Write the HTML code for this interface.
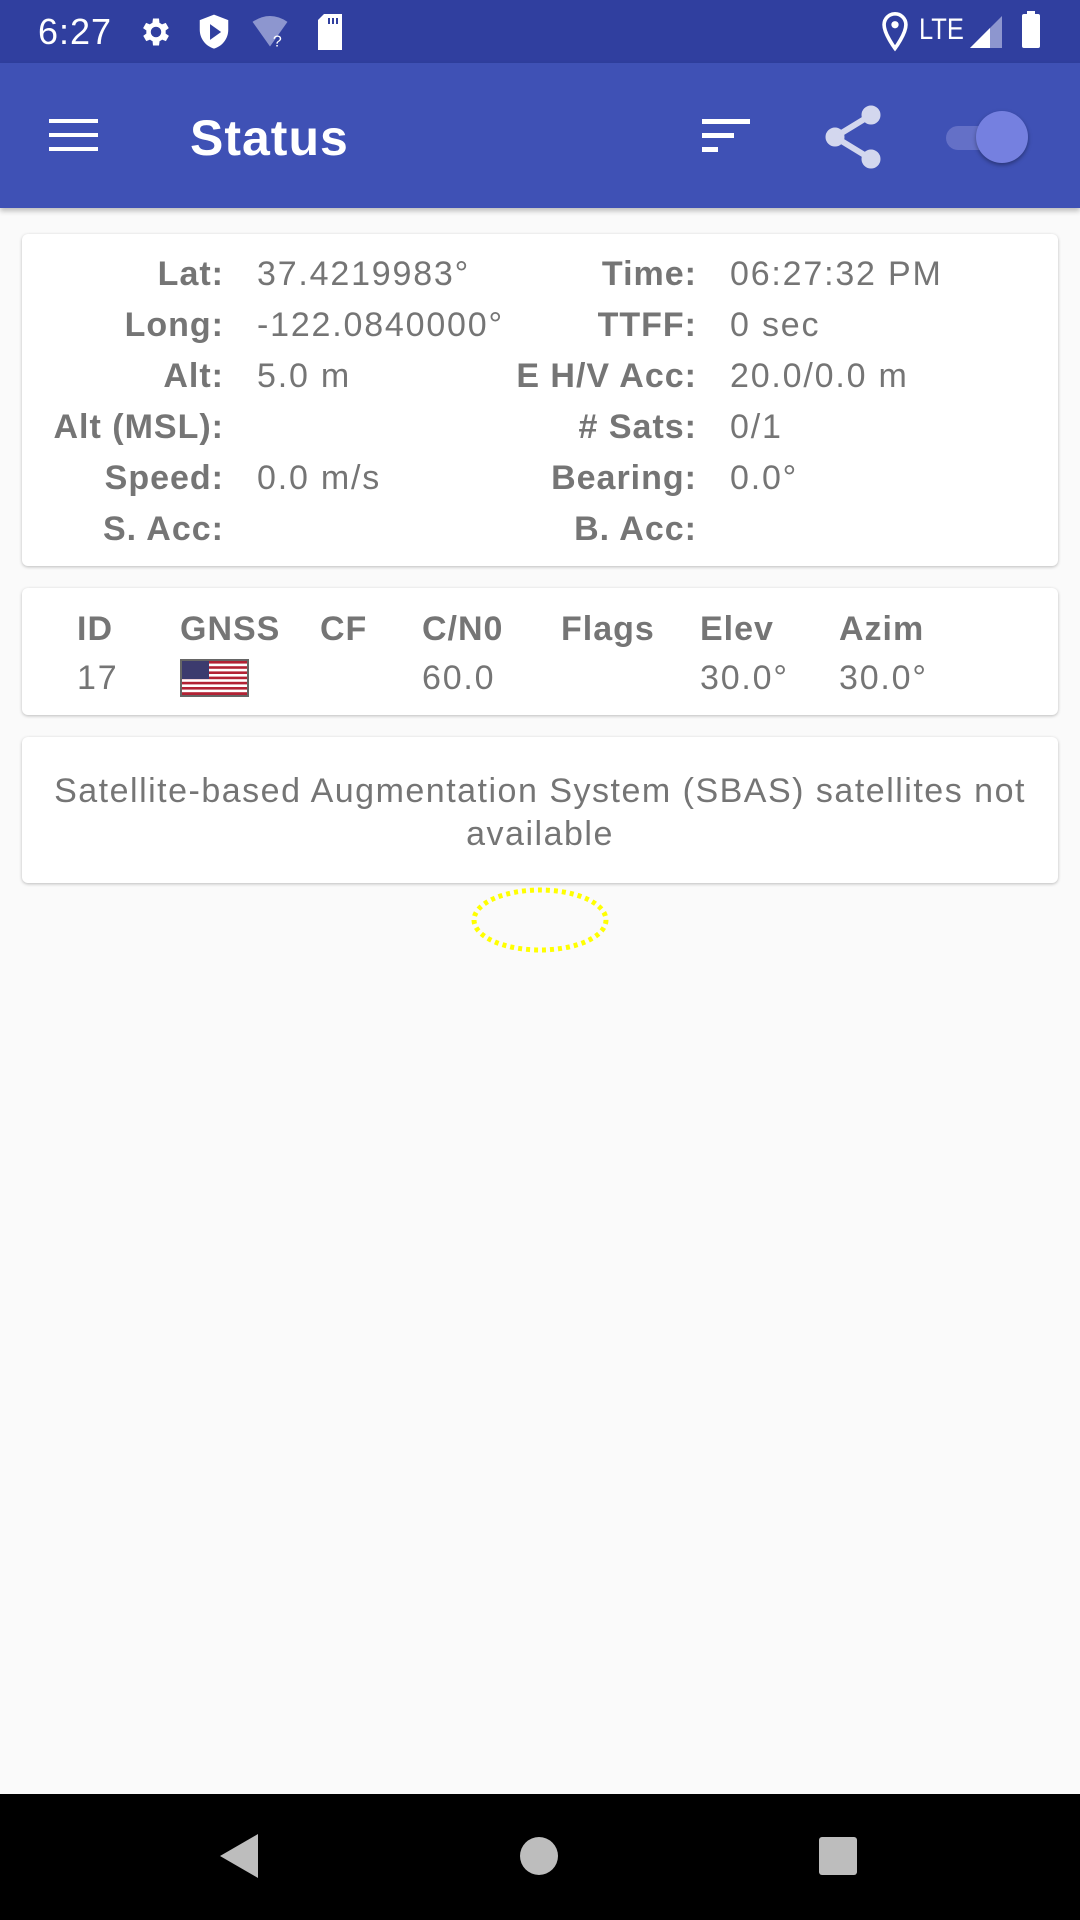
<!DOCTYPE html>
<html><head><meta charset="utf-8"><style>
*{margin:0;padding:0;box-sizing:border-box}
body{width:1080px;height:1920px;background:#FAFAFA;font-family:"Liberation Sans",sans-serif;position:relative;overflow:hidden;color:#757575}
.sb{position:absolute;left:0;top:0;width:1080px;height:63px;background:#303F9F;color:#fff}
.ab{position:absolute;left:0;top:63px;width:1080px;height:145px;background:#3F51B5;box-shadow:0 3px 5px rgba(0,0,0,.25)}
.card{position:absolute;left:22px;width:1036px;background:#fff;border-radius:6px;box-shadow:0 1px 3px rgba(0,0,0,.25)}
.t{position:absolute;font-size:34px;line-height:40px;white-space:nowrap;letter-spacing:1.8px}
.l{font-weight:bold;text-align:right;letter-spacing:1px}
.nav{position:absolute;left:0;top:1794px;width:1080px;height:126px;background:#000}
</style></head><body>
<div class="sb">
 <div style="position:absolute;left:38px;top:11px;font-size:36px;letter-spacing:1px">6:27</div>
 <svg style="position:absolute;left:138px;top:14px" width="36" height="36" viewBox="0 0 24 24"><path fill="#fff" d="M19.4 13a7.5 7.5 0 0 0 0-2l2.1-1.6-2-3.5-2.5 1a7 7 0 0 0-1.7-1L15 3h-4l-.4 2.9a7 7 0 0 0-1.7 1l-2.5-1-2 3.5L6.6 11a7.5 7.5 0 0 0 0 2l-2.1 1.6 2 3.5 2.5-1a7 7 0 0 0 1.7 1L11 21h4l.4-2.9a7 7 0 0 0 1.7-1l2.5 1 2-3.5zM13 15.5a3.5 3.5 0 1 1 0-7 3.5 3.5 0 0 1 0 7z" transform="translate(-1 0)"/></svg>
 <svg style="position:absolute;left:198px;top:13px" width="32" height="38" viewBox="0 0 20 24"><path fill="#fff" d="M10 1 1 4.5v6c0 6 4 10.5 9 12 5-1.5 9-6 9-12v-6z"/><path fill="#303F9F" d="M7.5 7v10l7-5z"/></svg>
 <svg style="position:absolute;left:252px;top:16px" width="36" height="32" viewBox="0 0 24 22"><path fill="#8d96cf" d="M0 4Q12-4 24 4L12 21z"/><text x="14" y="21" font-size="11" fill="#fff" font-family="Liberation Sans">?</text></svg>
 <svg style="position:absolute;left:316px;top:14px" width="28" height="36" viewBox="0 0 14 18"><path fill="#fff" d="M4 0h9v18H1V3z"/><path fill="#303F9F" d="M6 2h1v3H6zM8 2h1v3H8zM10 2h1v3h-1z"/></svg>
 <svg style="position:absolute;left:882px;top:12px" width="26" height="40" viewBox="0 0 14 22"><path fill="none" stroke="#fff" stroke-width="2" d="M7 1a6 6 0 0 0-6 6c0 5 6 13 6 13s6-8 6-13a6 6 0 0 0-6-6z"/><circle cx="7" cy="7" r="2" fill="#fff"/></svg>
 <div style="position:absolute;left:919px;top:13px;font-size:30px;transform:scaleX(.85);transform-origin:left">LTE</div>
 <svg style="position:absolute;left:970px;top:16px" width="32" height="32" viewBox="0 0 32 32"><path fill="#8d96cf" d="M32 0v32H0z"/><path fill="#fff" d="M20 12v20H0z"/></svg>
 <div style="position:absolute;left:1022px;top:14px;width:18px;height:34px;background:#fff;border-radius:2px"></div>
 <div style="position:absolute;left:1027px;top:11px;width:8px;height:4px;background:#fff"></div>
</div>
<div class="ab">
 <div style="position:absolute;left:49px;top:56px;width:49px;height:4px;background:#fff;box-shadow:0 14px 0 #fff,0 28px 0 #fff"></div>
 <div style="position:absolute;left:190px;top:46px;font-size:50px;color:#fff;font-weight:bold;letter-spacing:1px">Status</div>
 <div style="position:absolute;left:702px;top:56px;width:48px;height:5px;background:#fff"></div>
 <div style="position:absolute;left:702px;top:70px;width:32px;height:5px;background:#fff"></div>
 <div style="position:absolute;left:702px;top:84px;width:16px;height:5px;background:#fff"></div>
 <svg style="position:absolute;left:822px;top:42px" width="62" height="64" viewBox="0 0 62 64"><g fill="#d3d7ee" stroke="#d3d7ee"><circle cx="49" cy="10" r="9"/><circle cx="13" cy="32" r="9"/><circle cx="49" cy="54" r="9"/><path stroke-width="6" d="M49 10 13 32 49 54" fill="none"/></g></svg>
 <div style="position:absolute;left:946px;top:63px;width:70px;height:24px;border-radius:12px;background:#6470c7"></div>
 <div style="position:absolute;left:976px;top:48px;width:52px;height:52px;border-radius:50%;background:#7580e0;box-shadow:0 2px 4px rgba(0,0,0,.35)"></div>
</div>

<div class="card" style="top:234px;height:332px">
 <div class="t l" style="right:834px;top:20px">Lat:</div><div class="t" style="left:235px;top:20px">37.4219983°</div>
 <div class="t l" style="right:834px;top:71px">Long:</div><div class="t" style="left:235px;top:71px">-122.0840000°</div>
 <div class="t l" style="right:834px;top:122px">Alt:</div><div class="t" style="left:235px;top:122px">5.0 m</div>
 <div class="t l" style="right:834px;top:173px">Alt (MSL):</div>
 <div class="t l" style="right:834px;top:224px">Speed:</div><div class="t" style="left:235px;top:224px">0.0 m/s</div>
 <div class="t l" style="right:834px;top:275px">S. Acc:</div>
 <div class="t l" style="right:361px;top:20px">Time:</div><div class="t" style="left:708px;top:20px">06:27:32 PM</div>
 <div class="t l" style="right:361px;top:71px">TTFF:</div><div class="t" style="left:708px;top:71px">0 sec</div>
 <div class="t l" style="right:361px;top:122px">E H/V Acc:</div><div class="t" style="left:708px;top:122px">20.0/0.0 m</div>
 <div class="t l" style="right:361px;top:173px"># Sats:</div><div class="t" style="left:708px;top:173px">0/1</div>
 <div class="t l" style="right:361px;top:224px">Bearing:</div><div class="t" style="left:708px;top:224px">0.0°</div>
 <div class="t l" style="right:361px;top:275px">B. Acc:</div>
</div>

<div class="card" style="top:588px;height:127px">
 <div class="t l" style="left:55px;top:21px">ID</div>
 <div class="t l" style="left:158px;top:21px">GNSS</div>
 <div class="t l" style="left:298px;top:21px">CF</div>
 <div class="t l" style="left:400px;top:21px">C/N0</div>
 <div class="t l" style="left:539px;top:21px">Flags</div>
 <div class="t l" style="left:678px;top:21px">Elev</div>
 <div class="t l" style="left:817px;top:21px">Azim</div>
 <div class="t" style="left:55px;top:70px">17</div>
 <svg style="position:absolute;left:158px;top:71px" width="69" height="38" viewBox="0 0 69 38"><rect width="69" height="38" fill="#666"/><g transform="translate(2 2)"><rect width="65" height="34" fill="#fff"/><g fill="#b22234"><rect y="0" width="65" height="2.6"/><rect y="5.2" width="65" height="2.6"/><rect y="10.4" width="65" height="2.6"/><rect y="15.6" width="65" height="2.6"/><rect y="20.8" width="65" height="2.6"/><rect y="26" width="65" height="2.6"/><rect y="31.2" width="65" height="2.8"/></g><rect width="27" height="18" fill="#3c3b6e"/></g></svg>
 <div class="t" style="left:400px;top:70px">60.0</div>
 <div class="t" style="left:678px;top:70px">30.0°</div>
 <div class="t" style="left:817px;top:70px">30.0°</div>
</div>

<div class="card" style="top:737px;height:146px">
 <div class="t" style="left:0;width:1036px;text-align:center;top:33px;line-height:43px;white-space:normal;padding:0 20px;letter-spacing:1.5px">Satellite-based Augmentation System (SBAS) satellites not available</div>
</div>

<svg style="position:absolute;left:468px;top:884px" width="144" height="72"><ellipse cx="72" cy="36" rx="66" ry="30" fill="none" stroke="#ffff00" stroke-width="5" stroke-dasharray="4 4"/></svg>

<div class="nav">
 <svg style="position:absolute;left:218px;top:38px" width="44" height="48"><path d="M40 2v44L2 24z" fill="#bdbdbd"/></svg>
 <div style="position:absolute;left:520px;top:43px;width:38px;height:38px;border-radius:50%;background:#bdbdbd"></div>
 <div style="position:absolute;left:819px;top:43px;width:38px;height:38px;border-radius:3px;background:#bdbdbd"></div>
</div>
</body></html>
